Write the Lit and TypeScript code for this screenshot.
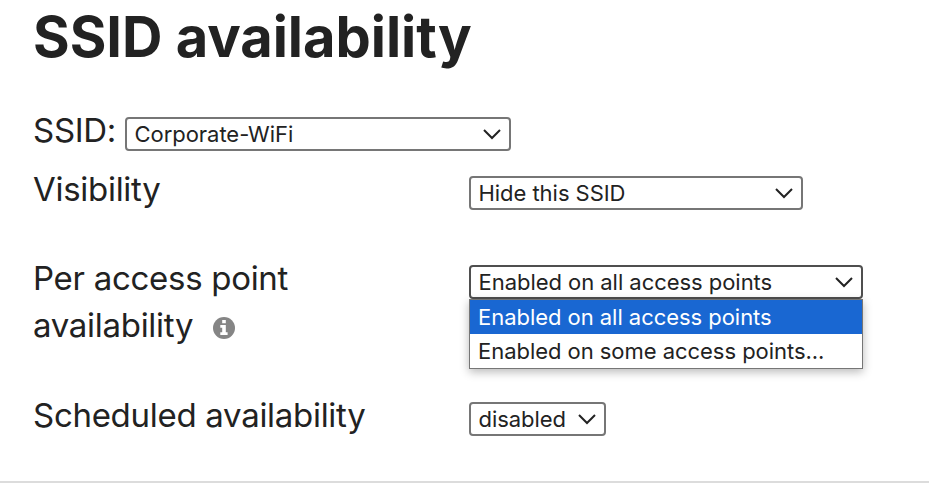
import { LitElement, html, css, svg } from "lit";
import { customElement, property } from "lit/decorators.js";

@customElement("select-box")
class SelectBox extends LitElement {
  @property() value = "";
  @property({ type: Array }) options: string[] = [];
  @property({ type: Boolean, reflect: true }) open = false;

  static styles = css`
    :host {
      display: block;
      position: relative;
      height: 34px;
      font-size: 22px;
      letter-spacing: -0.04px;
    }
    .field {
      box-sizing: border-box;
      height: 34px;
      border: 2px solid #767676;
      border-radius: 4px;
      background: #fff;
      padding: 0 8px 0 7.5px;
      display: flex;
      align-items: center;
      justify-content: space-between;
      line-height: 30px;
      white-space: nowrap;
    }
    :host([open]) .field {
      border-color: #4f4f4f;
    }
    .arrow {
      display: block;
      width: 18px;
      height: 12px;
      flex: none;
    }
    .menu {
      position: absolute;
      box-sizing: border-box;
      top: 34px;
      left: 0;
      width: 100%;
      height: 70px;
      border: 1px solid #767676;
      background: #fff;
      box-shadow: 0 3px 9px rgba(0, 0, 0, 0.28);
    }
    .option {
      height: 34px;
      line-height: 34px;
      padding-left: 8px;
      white-space: nowrap;
    }
    .option.selected {
      background: #1967d2;
      color: #fff;
    }
  `;

  render() {
    return html`
      <div class="field">
        <span>${this.value}</span>
        <svg class="arrow" viewBox="0 0 18 12">
          ${svg`<path d="M1 2L9 10L17 2" fill="none" stroke="#222" stroke-width="2"/>`}
        </svg>
      </div>
      ${this.open
        ? html`<div class="menu">
            ${this.options.map(
              (o) => html`<div class="option ${o === this.value ? "selected" : ""}">${o}</div>`
            )}
          </div>`
        : ""}
    `;
  }
}

@customElement("app-root")
class AppRoot extends LitElement {
  static styles = css`
    :host {
      display: flex;
      flex-direction: column;
      box-sizing: border-box;
      width: 929px;
      height: 483px;
      overflow: hidden;
      background: #fff;
      color: #222;
      font-family: Inter, "Liberation Sans", sans-serif;
      font-size: 33px;
      letter-spacing: -0.29px;
      line-height: 47px;
      border-bottom: 2px solid #dcdcdc;
    }
    .title {
      margin: 0 0 0 33px;
      height: 107px;
      font-size: 56px;
      line-height: 74px;
      font-weight: 700;
      letter-spacing: -0.02px;
    }
    .row {
      display: grid;
      grid-template-columns: 436px auto;
      justify-content: start;
      align-items: start;
      padding-left: 33px;
      flex: none;
    }
    .ssid {
      grid-template-columns: 92px auto;
      height: 59px;
    }
    .visibility {
      height: 89px;
    }
    .points {
      height: 137px;
    }
    .control {
      margin-top: 10px;
    }
    .w-ssid { width: 386px; }
    .w-visibility { width: 334px; }
    .w-points { width: 394px; }
    .w-schedule { width: 137px; }
    .info {
      width: 22px;
      height: 22px;
      margin-left: 10.5px;
      vertical-align: -2px;
    }
  `;

  render() {
    return html`
      <h1 class="title">SSID availability</h1>
      <div class="row ssid">
        <span>SSID:</span>
        <select-box class="control w-ssid" value="Corporate-WiFi"></select-box>
      </div>
      <div class="row visibility">
        <span>Visibility</span>
        <select-box class="control w-visibility" value="Hide this SSID"></select-box>
      </div>
      <div class="row points">
        <span>Per access point<br />availability
          <svg class="info" viewBox="0 0 22 22">
            <circle cx="11" cy="11" r="11" fill="#858585" />
            <path d="M9.2 3h3.6v3.2H9.2zM7.3 8h5.5v7.2h1.8V18H7.3v-2.8h1.9v-4.4H7.3z" fill="#fff" />
          </svg>
        </span>
        <select-box
          class="control w-points"
          open
          value="Enabled on all access points"
          .options=${["Enabled on all access points", "Enabled on some access points..."]}
        ></select-box>
      </div>
      <div class="row">
        <span>Scheduled availability</span>
        <select-box class="control w-schedule" value="disabled"></select-box>
      </div>
    `;
  }
}
